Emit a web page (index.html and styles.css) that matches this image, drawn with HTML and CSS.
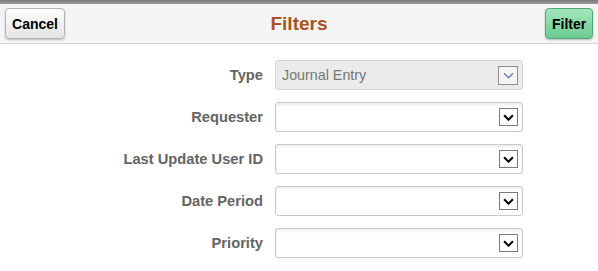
FILE: index.html
```html
<!DOCTYPE html>
<html lang="en">
<head>
    <meta charset="UTF-8">
    <meta name="viewport" content="width=device-width, initial-scale=1.0">
    <title>Filters</title>
    <link rel="stylesheet" href="styles.css">
</head>
<body>
    <div class="top-strip"></div>

    <div class="header">
        <button class="btn btn-cancel">Cancel</button>
        <h1>Filters</h1>
        <button class="btn btn-filter">Filter</button>
    </div>

    <div class="form">
        <div class="row">
            <label class="label">Type</label>
            <div class="select disabled">
                <span class="value">Journal Entry</span>
                <span class="arrow">
                    <svg viewBox="0 0 10 6"><path d="M1 1l4 4 4-4"/></svg>
                </span>
            </div>
        </div>
        <div class="row">
            <label class="label">Requester</label>
            <div class="select">
                <span class="value"></span>
                <span class="arrow">
                    <svg viewBox="0 0 10 6"><path d="M1 1l4 4 4-4"/></svg>
                </span>
            </div>
        </div>
        <div class="row">
            <label class="label">Last Update User ID</label>
            <div class="select">
                <span class="value"></span>
                <span class="arrow">
                    <svg viewBox="0 0 10 6"><path d="M1 1l4 4 4-4"/></svg>
                </span>
            </div>
        </div>
        <div class="row">
            <label class="label">Date Period</label>
            <div class="select">
                <span class="value"></span>
                <span class="arrow">
                    <svg viewBox="0 0 10 6"><path d="M1 1l4 4 4-4"/></svg>
                </span>
            </div>
        </div>
        <div class="row">
            <label class="label">Priority</label>
            <div class="select">
                <span class="value"></span>
                <span class="arrow">
                    <svg viewBox="0 0 10 6"><path d="M1 1l4 4 4-4"/></svg>
                </span>
            </div>
        </div>
    </div>
</body>
</html>
```

FILE: styles.css
```css
* {
    margin: 0;
    padding: 0;
    box-sizing: border-box;
}

body {
    background: #fff;
    font-family: 'Liberation Sans', Arial, sans-serif;
    width: 598px;
    height: 271px;
    overflow: hidden;
}

.top-strip {
    height: 4px;
    background: linear-gradient(#7a7a7a, #9a9a9a);
}

.header {
    height: 40px;
    background: #f5f5f5;
    border-bottom: 1px solid #d4d4d4;
    display: flex;
    align-items: center;
    justify-content: space-between;
    padding: 0 5px;
    position: relative;
}

.header h1 {
    position: absolute;
    left: 0;
    right: 0;
    text-align: center;
    font-size: 19px;
    font-weight: bold;
    color: #a9541c;
    pointer-events: none;
}

.btn {
    height: 31px;
    padding: 0 6px;
    font-family: inherit;
    font-size: 14px;
    font-weight: bold;
    color: #000;
    border-radius: 4px;
    position: relative;
    z-index: 1;
}

.btn-cancel {
    width: 60px;
    background: linear-gradient(#fdfdfd, #e4e4e4);
    border: 1px solid #b5b5b5;
    box-shadow: 0 1px 2px rgba(0, 0, 0, 0.25);
}

.btn-filter {
    width: 48px;
    background: linear-gradient(#a4e6bd, #6ccb91);
    border: 1px solid #4fa874;
    box-shadow: 0 1px 2px rgba(0, 0, 0, 0.25);
}

.form {
    padding-top: 16px;
    display: flex;
    flex-direction: column;
    gap: 12px;
}

.row {
    display: flex;
    align-items: center;
    gap: 12px;
}

.label {
    width: 263px;
    text-align: right;
    font-size: 14.7px;
    font-weight: bold;
    color: #646464;
}

.select {
    width: 248px;
    height: 30px;
    border: 1px solid #c9c9c9;
    border-radius: 3px;
    background: #fff;
    box-shadow: inset 0 2px 3px rgba(0, 0, 0, 0.08);
    display: flex;
    align-items: center;
    justify-content: space-between;
    padding: 0 4px 0 6px;
}

.select.disabled {
    background: #ebebeb;
    border-color: #d6d6d6;
    box-shadow: none;
}

.value {
    font-size: 14.3px;
    color: #777;
}

.arrow {
    width: 19px;
    height: 18px;
    border: 1px solid #7b7b7b;
    background: #fff;
    display: flex;
    align-items: center;
    justify-content: center;
}

.arrow svg {
    width: 11px;
    height: 7px;
    fill: none;
    stroke: #000;
    stroke-width: 1.8;
}

.disabled .arrow {
    width: 20px;
    height: 19px;
    border-color: #8e8e8e;
    background: #f4f4f4;
}

.disabled .arrow svg {
    stroke: #6b7fa6;
    stroke-width: 1.3;
}
```
